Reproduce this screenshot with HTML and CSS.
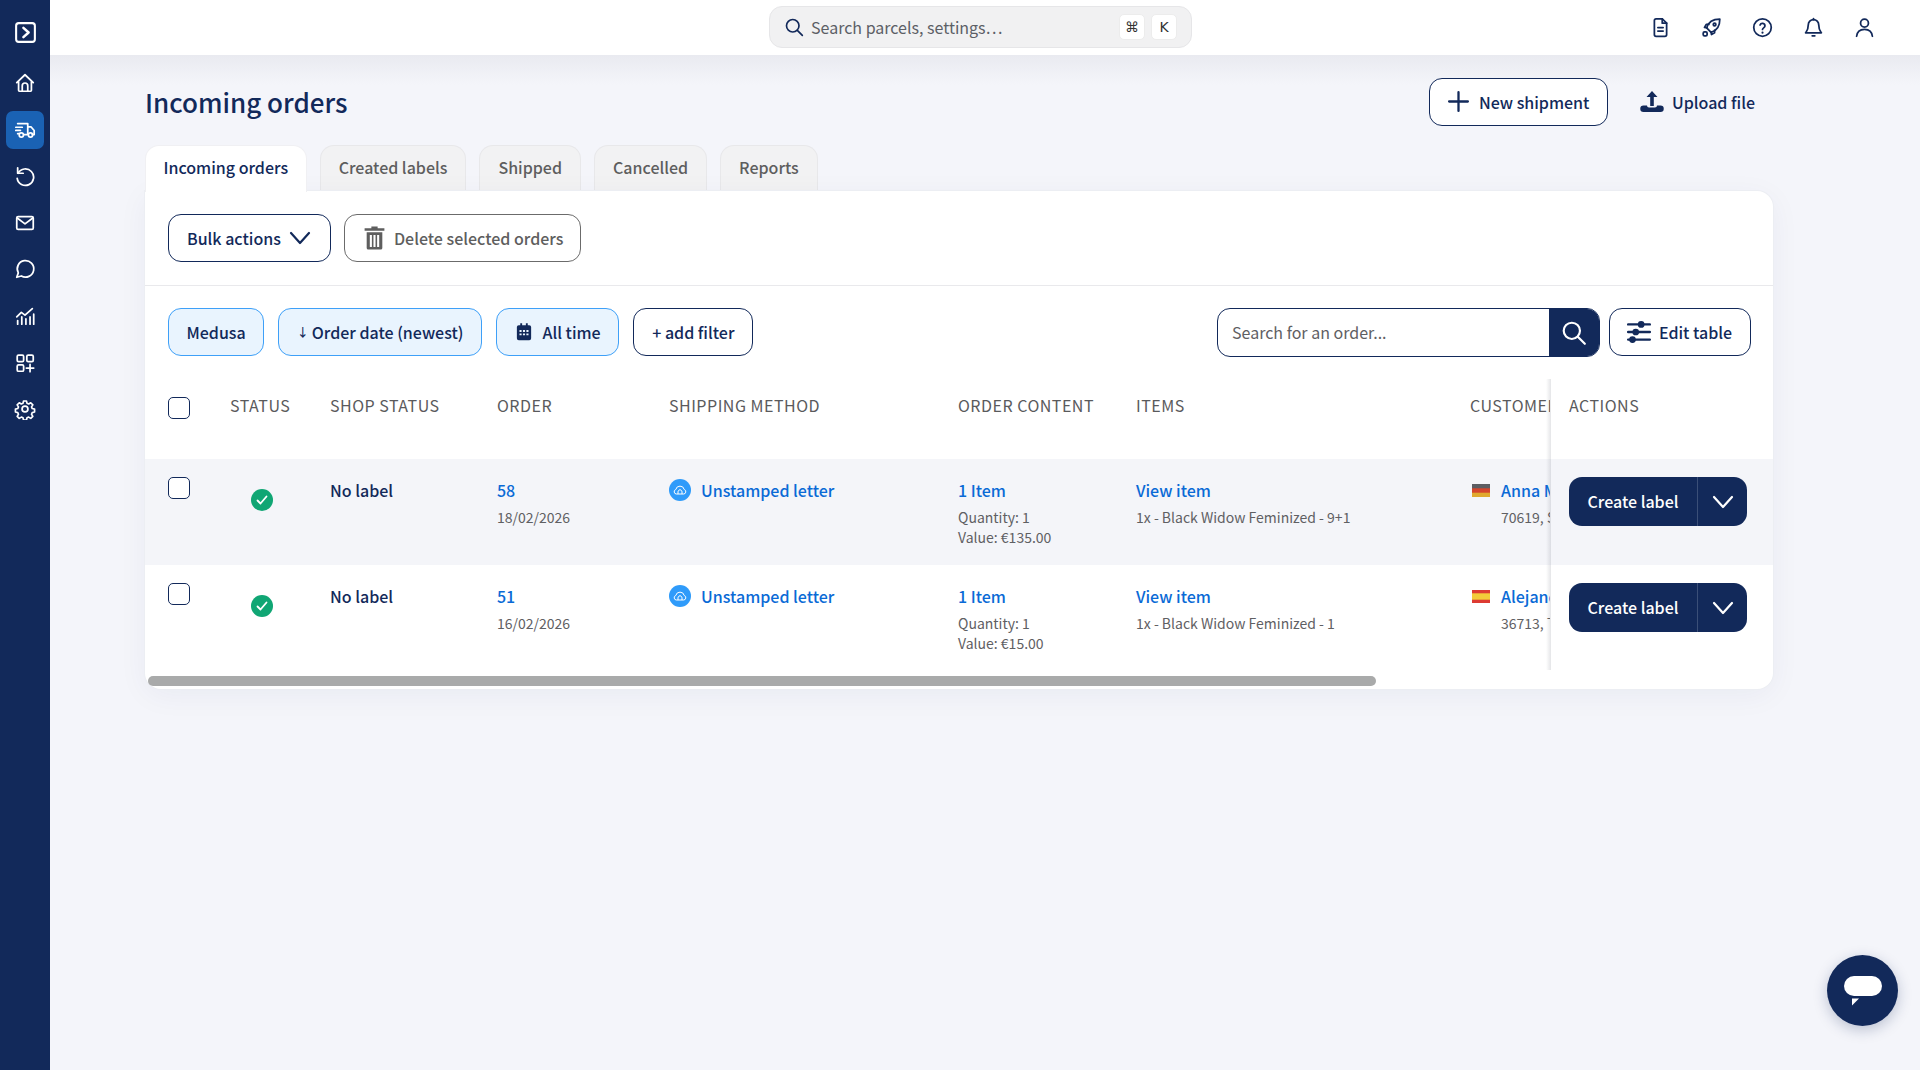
FILE: index.html
```html
<!DOCTYPE html>
<html lang="en">
<head>
<meta charset="utf-8">
<title>Incoming orders</title>
<link rel="stylesheet" href="styles.css">
</head>
<body>
<div class="app">
  <nav class="sidebar">
    <a class="nav-toggle"><svg class="ico" viewBox="0 0 24 24"><rect x="3" y="3" width="18" height="18" rx="2.500"/><path d="M10 7.500l5 4.500-5 4.500" stroke-width="2.400"/></svg></a>
    <div class="nav-list">
      <a class="nav-item"><svg class="ico" viewBox="0 0 24 24"><path d="M3 11.500L12 3l9 8.500M5 10v10a1 1 0 0 0 1 1h12a1 1 0 0 0 1-1V10"/><path d="M9 21v-6a3 3 0 0 1 6 0v6"/></svg></a>
      <a class="nav-item active"><svg class="ico" viewBox="0 0 24 24"><path d="M4 5h11v11.500M15 8.500h3.500L22 12.500v4.500h-2M15 17h-4"/><circle cx="8" cy="17.500" r="2.300"/><circle cx="18" cy="17.500" r="2.300"/><path d="M2 9h7M2 12.500h5M4 16h1.500"/></svg></a>
      <a class="nav-item"><svg class="ico" viewBox="0 0 24 24"><path d="M4 3v6h6"/><path d="M4.500 9A9 9 0 1 1 3.500 14.500"/></svg></a>
      <a class="nav-item"><svg class="ico" viewBox="0 0 24 24"><rect x="3" y="5" width="18" height="14" rx="1.500"/><path d="M3.500 6.500L12 13l8.500-6.500"/></svg></a>
      <a class="nav-item"><svg class="ico" viewBox="0 0 24 24"><path d="M3 21l1.700-4.800A9 9 0 1 1 8 19.600z"/></svg></a>
      <a class="nav-item"><svg class="ico" viewBox="0 0 24 24"><path d="M3 13l5-5 4 3 8-7M4 21v-4M8.500 21v-8M13 21v-6M17.500 21v-8M21.500 21V10"/></svg></a>
      <a class="nav-item"><svg class="ico" viewBox="0 0 24 24"><rect x="3.500" y="3.500" width="7" height="7" rx="1.500"/><rect x="14" y="3.500" width="7" height="7" rx="1.500"/><rect x="3.500" y="14" width="7" height="7" rx="1.500"/><path d="M17.500 13.500v8M13.500 17.500h8"/></svg></a>
      <a class="nav-item"><svg class="ico" viewBox="0 0 24 24"><circle cx="12" cy="12" r="3.200"/><path d="M10.300 2.800h3.400l.6 2.700 1.900.8 2.400-1.500 2.400 2.400-1.500 2.400.8 1.900 2.700.6v3.400l-2.700.6-.8 1.900 1.500 2.400-2.400 2.400-2.400-1.500-1.900.8-.6 2.700h-3.400l-.6-2.700-1.900-.8-2.400 1.500-2.400-2.400 1.500-2.400-.8-1.900-2.700-.6v-3.400l2.700-.6.8-1.900-1.500-2.400 2.400-2.400 2.400 1.500 1.900-.8z" transform="translate(.6 .6) scale(.95)"/></svg></a>
    </div>
  </nav>

  <div class="body">
    <header class="topbar">
      <div class="top-spacer"></div>
      <div class="cmd-search">
        <svg class="ico cmd-ico" viewBox="0 0 24 24"><circle cx="10.500" cy="10.500" r="7.500"/><path d="M16 16l6 6"/></svg>
        <span class="cmd-text">Search parcels, settings…</span>
        <kbd class="key">⌘</kbd>
        <kbd class="key">K</kbd>
      </div>
      <div class="top-icons">
        <svg class="ico top-ico" viewBox="0 0 24 24"><path d="M5 4a2 2 0 0 1 2-2h7l5 5v13a2 2 0 0 1-2 2H7a2 2 0 0 1-2-2z"/><path d="M14 2v5h5M9 12h6M9 16h6"/></svg>
        <svg class="ico top-ico" viewBox="0 0 24 24"><path d="M9 15l-2.500-2.500C8 7 13 2.500 21.500 2.500 21.500 11 17 16 11.500 17.500z"/><circle cx="15.500" cy="8.500" r="1.500"/><path d="M9 8.500H6L4 12l3 .5M15.500 15v3l-3.500 2-.5-3"/><rect x="2.500" y="17" width="4.500" height="4.500" rx="1.500"/></svg>
        <svg class="ico top-ico" viewBox="0 0 24 24"><circle cx="12" cy="12" r="10"/><path d="M9.200 9.200a2.900 2.900 0 0 1 5.600 1c0 2-2.800 2.400-2.800 4"/><path d="M12 17.800v.2" stroke-width="2.400"/></svg>
        <svg class="ico top-ico" viewBox="0 0 24 24"><path d="M6 9a6 6 0 0 1 12 0c0 6 2.500 8 3 9H3c.5-1 3-3 3-9z"/><path d="M10.500 21.500h3M12 3V1.800"/></svg>
        <svg class="ico top-ico" viewBox="0 0 24 24"><circle cx="12" cy="7" r="4.500"/><path d="M3 22c.5-5 4-8 9-8s8.500 3 9 8"/></svg>
      </div>
    </header>

    <main class="main">
      <div class="page-head">
        <h1 class="title">Incoming orders</h1>
        <div class="head-actions">
          <button class="btn btn-outline new-shipment"><svg class="ico plus" viewBox="0 0 24 24"><path d="M12 3v18M3 12h18"/></svg>New shipment</button>
          <button class="btn btn-plain"><svg class="upload" viewBox="0 0 24 24"><path d="M12 1l5.500 6h-3.700v9h-3.600V7H6.500z"/><path d="M3.500 15.500h3.500a2 2 0 0 0 2 2h6a2 2 0 0 0 2-2l3.500 0a3 3 0 0 1 0 6.500H3.500a3 3 0 0 1 0-6.500z"/></svg>Upload file</button>
        </div>
      </div>

      <div class="tabs">
        <a class="tab tab-active">Incoming orders</a>
        <a class="tab">Created labels</a>
        <a class="tab">Shipped</a>
        <a class="tab">Cancelled</a>
        <a class="tab">Reports</a>
      </div>

      <section class="card">
        <div class="bulk-bar">
          <button class="btn btn-outline">Bulk actions<svg class="ico chev" viewBox="0 0 24 24"><path d="M3 7l9 10 9-10"/></svg></button>
          <button class="btn btn-gray"><svg class="trash" viewBox="0 0 24 24"><path d="M9 1.500h6V3h6.500v2.500h-19V3H9z"/><path fill-rule="evenodd" d="M4.500 7h15v15a1.500 1.500 0 0 1-1.500 1.500H6A1.500 1.500 0 0 1 4.500 22zM7.500 9.500v11.500h2V9.500zM11 9.500v11.500h2V9.500zM14.500 9.500v11.500h2V9.500z"/></svg>Delete selected orders</button>
        </div>

        <div class="filter-bar">
          <div class="filters">
            <button class="btn btn-pill">Medusa</button>
            <button class="btn btn-pill sort-pill"><span class="arrow">↓</span>Order date (newest)</button>
            <button class="btn btn-pill"><svg class="cal" viewBox="0 0 24 24"><path fill-rule="evenodd" d="M7 1h2.500v2.500h5V1H17v2.500h2A2.500 2.500 0 0 1 21.500 6v15a2.500 2.500 0 0 1-2.500 2.500H5A2.500 2.500 0 0 1 2.500 21V6A2.500 2.500 0 0 1 5 3.500h2zM6 10v2.500h2.800V10zM10.600 10v2.500h2.800V10zM15.200 10v2.500H18V10zM6 14.500V17h2.800v-2.500zM10.600 14.500V17h2.800v-2.500zM15.200 14.500V17H18v-2.500z"/></svg>All time</button>
            <button class="btn btn-outline">+ add filter</button>
          </div>
          <div class="filter-right">
            <div class="order-search">
              <span class="order-input">Search for an order...</span>
              <span class="order-go"><svg class="ico go-ico" viewBox="0 0 24 24"><circle cx="10" cy="10" r="7.500"/><path d="M15.500 15.500L22 22"/></svg></span>
            </div>
            <button class="btn btn-outline edit-table"><svg class="ico sliders" viewBox="0 0 24 24"><path d="M2 5h20M2 12h20M2 19h20"/><circle class="dot" cx="14" cy="5" r="2"/><circle class="dot" cx="9" cy="12" r="2"/><circle class="dot" cx="6" cy="19" r="2"/></svg>Edit table</button>
          </div>
        </div>

        <div class="table">
          <div class="row row-head">
            <div class="cell"><span class="check"></span></div>
            <div class="cell">STATUS</div>
            <div class="cell">SHOP STATUS</div>
            <div class="cell">ORDER</div>
            <div class="cell">SHIPPING METHOD</div>
            <div class="cell">ORDER CONTENT</div>
            <div class="cell">ITEMS</div>
            <div class="cell cell-clip">CUSTOMER</div>
            <div class="cell cell-actions">ACTIONS</div>
          </div>

          <div class="row row-shade">
            <div class="cell"><span class="check"></span></div>
            <div class="cell cell-status"><svg class="status-ico" viewBox="0 0 22 22"><circle cx="11" cy="11" r="11"/><path d="M6.500 11.500l3 3 6-7"/></svg></div>
            <div class="cell strong">No label</div>
            <div class="cell"><a class="link">58</a><p class="meta">18/02/2026</p></div>
            <div class="cell"><a class="link method"><svg class="cloud" viewBox="0 0 22 22"><circle class="cloud-bg" cx="11" cy="11" r="11"/><path class="cloud-line" d="M7.500 15a2.300 2.300 0 0 1-.7-4.500 4.300 4.300 0 0 1 8.400 0 2.300 2.300 0 0 1-.7 4.500zM9 15v-2.800l2-1.700 2 1.700V15"/></svg>Unstamped letter</a></div>
            <div class="cell"><a class="link">1 Item</a><p class="meta">Quantity: 1<br>Value: €135.00</p></div>
            <div class="cell"><a class="link">View item</a><p class="meta">1x - Black Widow Feminized - 9+1</p></div>
            <div class="cell cell-clip cust"><svg class="flag" viewBox="0 0 18 13"><rect width="18" height="13" fill="#e0a92e"/><rect width="18" height="8.700" fill="#d4452c"/><rect width="18" height="4.300" fill="#5c5d62"/></svg><div class="cust-text"><a class="link">Anna Müller</a><p class="meta">70619, Stuttgart</p></div></div>
            <div class="cell cell-actions">
              <div class="split"><span class="split-main">Create label</span><span class="split-chev"><svg class="ico chev-w" viewBox="0 0 24 24"><path d="M3 7l9 10 9-10"/></svg></span></div>
            </div>
          </div>

          <div class="row">
            <div class="cell"><span class="check"></span></div>
            <div class="cell cell-status"><svg class="status-ico" viewBox="0 0 22 22"><circle cx="11" cy="11" r="11"/><path d="M6.500 11.500l3 3 6-7"/></svg></div>
            <div class="cell strong">No label</div>
            <div class="cell"><a class="link">51</a><p class="meta">16/02/2026</p></div>
            <div class="cell"><a class="link method"><svg class="cloud" viewBox="0 0 22 22"><circle class="cloud-bg" cx="11" cy="11" r="11"/><path class="cloud-line" d="M7.500 15a2.300 2.300 0 0 1-.7-4.500 4.300 4.300 0 0 1 8.400 0 2.300 2.300 0 0 1-.7 4.500zM9 15v-2.800l2-1.700 2 1.700V15"/></svg>Unstamped letter</a></div>
            <div class="cell"><a class="link">1 Item</a><p class="meta">Quantity: 1<br>Value: €15.00</p></div>
            <div class="cell"><a class="link">View item</a><p class="meta">1x - Black Widow Feminized - 1</p></div>
            <div class="cell cell-clip cust"><svg class="flag" viewBox="0 0 18 13"><rect width="18" height="13" fill="#dd3b32"/><rect y="3.300" width="18" height="6.400" fill="#f3cb3a"/></svg><div class="cust-text"><a class="link">Alejandro Ruiz</a><p class="meta">36713, Tui</p></div></div>
            <div class="cell cell-actions">
              <div class="split"><span class="split-main">Create label</span><span class="split-chev"><svg class="ico chev-w" viewBox="0 0 24 24"><path d="M3 7l9 10 9-10"/></svg></span></div>
            </div>
          </div>
        </div>

        <div class="scroll-track"><div class="scroll-thumb"></div></div>
      </section>
    </main>
  </div>
</div>

<button class="chat"><svg class="chat-ico" viewBox="0 0 38 30"><rect x="0" y="0" width="38" height="20" rx="10"/><path d="M8 22.500h7l-7 7z"/></svg></button>
</body>
</html>
```
FILE: styles.css
```css
* { box-sizing: border-box; }
html, body { margin: 0; height: 100%; }
body {
  font-family: "Noto Sans CJK JP", "Noto Sans", sans-serif;
  color: #12295a;
  background: #f4f5fa;
  font-size: 16px;
  overflow: hidden;
}
p { margin: 0; }
h1 { margin: 0; }
.app { display: flex; height: 100vh; }
.ico { fill: none; stroke: currentColor; stroke-width: 2; stroke-linecap: round; stroke-linejoin: round; display: block; }

/* sidebar */
.sidebar { width: 50px; flex: none; background: #12295a; color: #fff; display: flex; flex-direction: column; align-items: center; padding-top: 20px; }
.nav-toggle { display: block; width: 25px; height: 25px; }
.nav-toggle .ico { width: 25px; height: 25px; }
.nav-list { margin-top: 19px; display: flex; flex-direction: column; gap: 8.600px; }
.nav-item { width: 38px; height: 38px; border-radius: 7px; display: flex; align-items: center; justify-content: center; }
.nav-item .ico { width: 22px; height: 22px; stroke-width: 1.900; }
.nav-item.active { background: #1a62b4; }

/* topbar */
.body { flex: 1; min-width: 0; display: flex; flex-direction: column; }
.topbar { height: 55px; flex: none; background: #fff; display: flex; align-items: flex-start; padding-top: 6px; position: relative; }
.top-spacer { width: 719px; flex: none; }
.cmd-search { width: 423px; height: 42px; flex: none; background: #f1f1f2; border: 1px solid #e6e6e8; border-radius: 13px; display: flex; align-items: center; padding: 0 14px; }
.cmd-ico { width: 20px; height: 20px; flex: none; }
.cmd-text { margin-left: 7px; flex: 1; color: #5c5f66; font-size: 16px; }
.key { width: 26px; height: 26px; margin-left: 6px; background: #fff; border: 1px solid #ececec; border-radius: 5px; display: flex; align-items: center; justify-content: center; font-family: "DejaVu Sans", sans-serif; font-size: 14px; color: #333; }
.top-icons { margin-left: 458px; display: flex; align-items: center; gap: 30px; height: 42px; }
.top-ico { width: 21px; height: 21px; stroke-width: 2; }

/* main */
.main { flex: 1; padding: 23px 147px 0 95px; background: linear-gradient(#e9eaf0, #f4f5fa 30px); }
.page-head { display: flex; justify-content: space-between; align-items: center; height: 48px; padding-right: 18px; }
.title { font-size: 26px; font-weight: 500; line-height: 48px; color: #12295a; }
.head-actions { display: flex; align-items: center; gap: 32px; }

.btn { height: 48px; padding: 0 18px 1px; border-radius: 13px; font-family: inherit; font-size: 16px; font-weight: 500; display: inline-flex; align-items: center; background: #fff; cursor: pointer; white-space: nowrap; }
.btn-outline { border: 1.500px solid #12295a; color: #12295a; }
.btn-gray { border: 1.500px solid #6b6b6b; color: #5e5e5e; padding: 0 17px 1px; }
.btn-plain { border: 0; background: none; padding: 0; color: #12295a; }
.btn-pill { border: 1.500px solid #3ea0f8; background: #e9f4fe; color: #12295a; padding: 0 17.500px 1px; }
.new-shipment { width: 179px; padding: 0 16px 1px; }
.plus { width: 25px; height: 25px; margin-right: 8px; stroke-width: 2.200; }
.upload { width: 24px; height: 24px; margin-right: 8px; fill: #12295a; }
.chev { width: 24px; height: 24px; margin-left: 7px; stroke-width: 2.200; }
.trash { width: 25px; height: 25px; margin-right: 7px; fill: #5e5e5e; }
.cal { width: 18px; height: 19px; margin-right: 10px; fill: #12295a; }
.arrow { margin-right: 3px; font-size: 12px; }

/* tabs */
.tabs { margin-top: 19px; display: flex; gap: 13px; height: 46px; position: relative; }
.tab { padding: 0 18px 3px; background: #f2f2f3; border: 1px solid #e8e8ea; border-bottom: 0; border-radius: 14px 14px 0 0; display: flex; align-items: center; font-weight: 500; color: #5e5e5e; }
.tab-active { background: #fff; color: #12295a; border-color: #f0f0f3; position: relative; z-index: 1; height: 47px; padding: 0 17.500px 4px; }

/* card */
.card { background: #fff; border-radius: 0 16px 16px 16px; box-shadow: 0 0 0 1px #eceef3, 0 6px 30px rgba(18, 41, 90, .05); height: 498px; position: relative; }
.bulk-bar { height: 94.500px; padding: 23px 23px 0; border-bottom: 1.500px solid #e9e9ec; display: flex; gap: 13px; align-items: flex-start; }
.filter-bar { height: 93.500px; padding: 22.500px 22px 0 23px; display: flex; justify-content: space-between; align-items: flex-start; }
.filters { display: flex; gap: 14px; }
.filter-right { display: flex; gap: 9px; }
.order-search { width: 383px; height: 49px; border: 1.500px solid #12295a; border-radius: 13px; display: flex; overflow: hidden; }
.order-input { flex: 1; padding-left: 14px; color: #5f6063; font-size: 16px; line-height: 46px; }
.order-go { width: 50px; background: #12295a; color: #fff; display: flex; align-items: center; justify-content: center; }
.go-ico { width: 26px; height: 26px; stroke-width: 2; }
.edit-table { width: 142px; padding: 0 16px 1px; }
.sliders { width: 26px; height: 26px; margin-right: 7px; stroke-width: 2.200; }
.dot { fill: #12295a; }

/* table */
.row { display: grid; grid-template-columns: 62px 100px 167px 172px 289px 178px 334px 80px 223px; padding-left: 23px; height: 105px; }
.row-head { height: 80px; color: #5a5a5c; font-size: 16px; letter-spacing: .5px; }
.row-head .cell { padding-top: 14px; }
.row-shade { background: #f4f5f9; height: 106px; }
.cell { padding-top: 19px; font-size: 16px; line-height: 24px; min-width: 0; white-space: nowrap; }
.cell-clip { overflow: hidden; }
.cell-actions { padding-left: 19px; padding-top: 18px; position: relative; }
.cell-actions::before { content: ""; position: absolute; left: -4px; top: 0; bottom: 0; width: 5px; background: linear-gradient(to right, rgba(90, 95, 110, 0), rgba(90, 95, 110, .16)); }
.row-head .cell-actions { padding-top: 14px; }
.row-head .check { margin-top: 4px; }
.check { display: block; width: 22px; height: 22px; margin-top: -1px; border: 1.500px solid #12295a; border-radius: 5px; background: #fff; }
.cell-status { padding-left: 21px; padding-top: 30px; }
.status-ico { display: block; width: 22px; height: 22px; }
.status-ico circle { fill: #10a674; }
.status-ico path { fill: none; stroke: #fff; stroke-width: 1.800; stroke-linecap: round; stroke-linejoin: round; }
.strong { font-weight: 500; color: #12295a; }
.link { color: #0a6ad6; font-weight: 500; }
.method { display: flex; align-items: center; gap: 10px; }
.cloud { display: block; width: 22px; height: 22px; flex: none; }
.cloud-bg { fill: #2f9bfa; }
.cloud-line { fill: none; stroke: #fff; stroke-width: 1; }
.meta { margin-top: 5px; font-size: 14px; line-height: 20px; color: #5f6063; }
.cust { display: flex; gap: 11px; align-items: flex-start; padding-left: 2px; }
.flag { display: block; width: 18px; height: 13px; margin-top: 6px; flex: none; }
.cust-text { min-width: 0; }
.split { width: 178px; height: 49px; background: #12295a; border-radius: 13px; display: flex; color: #fff; font-weight: 500; }
.split-main { flex: 1; display: flex; align-items: center; justify-content: center; padding-bottom: 2px; border-right: 1px solid #3b4f78; }
.split-chev { width: 49px; display: flex; align-items: center; justify-content: center; }
.chev-w { width: 24px; height: 24px; stroke-width: 2.200; }

/* scrollbar */
.scroll-track { padding: 6px 0 0 3px; }
.scroll-thumb { width: 1228px; height: 10px; background: #a9aaaa; border-radius: 5px; }

/* chat */
.chat { position: fixed; left: 1827px; top: 955px; width: 71px; height: 71px; border: 0; border-radius: 50%; background: #12295a; display: flex; align-items: center; justify-content: center; box-shadow: 0 4px 14px rgba(18, 41, 90, .25); padding: 0; }
.chat-ico { display: block; width: 38px; height: 30px; fill: #fff; }
```
